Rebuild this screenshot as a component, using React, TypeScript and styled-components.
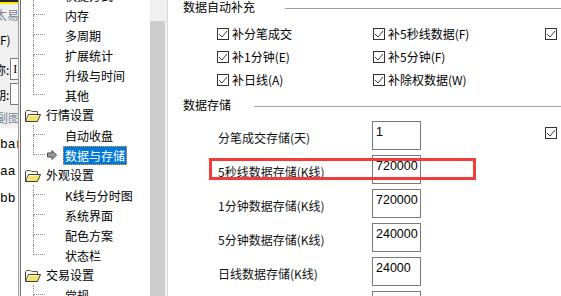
import React from "react";
import styled, { createGlobalStyle } from "styled-components";

const GlobalStyle = createGlobalStyle`
  html, body {
    margin: 0;
    padding: 0;
    background: #ffffff;
  }
  body {
    font-family: "Noto Sans CJK SC", "Liberation Sans", sans-serif;
    font-size: 12px;
    color: #000;
  }
`;

const Screen = styled.div`
  display: flex;
  width: 561px;
  height: 296px;
  overflow: hidden;
  background: #fff;
`;

/* ---------- window behind, only a sliver shows ---------- */

const BackWindow = styled.div`
  width: 18px;
  flex: none;
  display: flex;
  flex-direction: column;
  overflow: hidden;
  background: #f0f0f0;
  border-right: 1px solid #a0a0a0;
  white-space: nowrap;
`;

const TitleBand = styled.div`
  height: 2px;
  background: #ffea00;
  border-top: 2px solid #222;
`;

const BackText = styled.div<{ $top: number; $muted?: boolean; $shift?: number }>`
  margin-top: ${(p) => p.$top}px;
  height: 14px;
  line-height: 14px;
  color: ${(p) => (p.$muted ? "#7a8696" : "#000")};
  margin-left: ${(p) => p.$shift ?? 0}px;
`;

const BackField = styled.div<{ $top: number }>`
  display: flex;
  align-items: center;
  margin-top: ${(p) => p.$top}px;
  height: 22px;
  margin-left: -6px;
`;

const BackInput = styled.span`
  display: inline-block;
  width: 10px;
  height: 20px;
  margin-left: 1px;
  background: #fff;
  border: 1px solid #7a7a7a;
  border-right: none;
  font-family: "Liberation Serif", serif;
  font-size: 12px;
  line-height: 20px;
  padding-left: 2px;
`;

const CodeArea = styled.div`
  margin-top: 3px;
  flex: 1;
  background: #fff;
  padding-top: 3px;
  font-family: "Liberation Mono", monospace;
  font-size: 13px;
  line-height: 27px;
`;

const Gutter = styled.div`
  width: 1px;
  flex: none;
  background: #f0f0f0;
`;

/* ---------- tree ---------- */

const TreePanel = styled.div`
  width: 129px;
  flex: none;
  border-left: 1px solid #6f6f6f;
  background: #fff;
  overflow: hidden;
`;

const TreeList = styled.div`
  margin-top: -15px;
  display: flex;
  flex-direction: column;
`;

const GroupRow = styled.div`
  display: flex;
  align-items: center;
  height: 20px;
  padding-left: 4px;
`;

const GroupLabel = styled.span`
  margin-left: 5px;
  line-height: 16px;
  white-space: nowrap;
`;

const ChildRow = styled.div`
  display: flex;
  height: 20px;
`;

const Connector = styled.div`
  width: 12px;
  margin-left: 12px;
  flex: none;
  display: flex;
  flex-direction: column;
`;

const ConnTop = styled.div`
  height: 10px;
  border-left: 1px dotted #8a8a8a;
  border-bottom: 1px dotted #8a8a8a;
  box-sizing: border-box;
`;

const ConnBottom = styled.div<{ $last?: boolean }>`
  flex: 1;
  border-left: 1px ${(p) => (p.$last ? "none" : "dotted")} #8a8a8a;
`;

const IconSlot = styled.div`
  width: 16px;
  margin-left: 2px;
  flex: none;
  display: flex;
  align-items: center;
`;

const ChildLabel = styled.span<{ $selected?: boolean }>`
  align-self: center;
  height: 19px;
  line-height: 19px;
  padding: 0 2px;
  white-space: nowrap;
  box-sizing: border-box;
  color: ${(p) => (p.$selected ? "#fff" : "#000")};
  background: ${(p) => (p.$selected ? "#0078d7" : "transparent")};
  outline: ${(p) => (p.$selected ? "1px dotted #ff9b2f" : "none")};
  outline-offset: -1px;
`;

const ScrollBar = styled.div`
  width: 15px;
  flex: none;
  display: flex;
  flex-direction: column;
  background: #f0f0f0;
`;

const ScrollGap = styled.div`
  height: 21px;
`;

const ScrollThumb = styled.div`
  flex: 1;
  background: #cdcdcd;
`;

const Splitter = styled.div`
  width: 2px;
  flex: none;
  background: #f0f0f0;
  border-right: 1px solid #d9d9d9;
`;

/* ---------- settings page ---------- */

const Page = styled.div`
  flex: 1;
  min-width: 0;
  overflow: hidden;
  padding-left: 15px;
  display: flex;
  flex-direction: column;
`;

const GroupHeader = styled.div<{ $top: number }>`
  display: flex;
  align-items: center;
  height: 14px;
  margin-top: ${(p) => p.$top}px;
`;

const GroupTitle = styled.span`
  white-space: nowrap;
  line-height: 14px;
`;

const GroupLine = styled.div<{ $gap: number }>`
  flex: 1;
  height: 1px;
  margin-left: ${(p) => p.$gap}px;
  margin-top: 3px;
  background: #a0a0a0;
`;

const CheckGrid = styled.div`
  margin-top: 8px;
  padding-left: 34px;
  display: grid;
  grid-template-columns: 156px 172px 40px;
  grid-auto-rows: 23px;
`;

const CheckItem = styled.label`
  display: flex;
  align-items: center;
  gap: 3px;
  white-space: nowrap;
`;

const Box = styled.span`
  width: 12px;
  height: 12px;
  flex: none;
  box-sizing: border-box;
  border: 1px solid #333;
  background: #fff;
  display: flex;
  align-items: center;
  justify-content: center;
`;

const Fields = styled.div`
  margin-top: 9px;
  display: flex;
  flex-direction: column;
  gap: 5px;
`;

const FieldRow = styled.div`
  position: relative;
  display: grid;
  grid-template-columns: 154px 49px 124px 20px;
  height: 29px;
  padding-left: 35px;
`;

const FieldLabel = styled.span`
  align-self: center;
  margin-top: 3px;
  white-space: nowrap;
  color: #111;
`;

const ValueBox = styled.div`
  box-sizing: border-box;
  height: 29px;
  border: 1px solid #7a7a7a;
  padding: 2px 0 0 3px;
  font-family: "Liberation Sans", sans-serif;
  font-size: 12.5px;
  line-height: 16px;
  color: #000;
  background: #fff;
  white-space: nowrap;
  overflow: hidden;
`;

const FieldCheck = styled.div`
  grid-column: 4;
  align-self: start;
  margin-top: 6px;
`;

const Highlight = styled.div`
  position: absolute;
  left: 26px;
  top: 3px;
  width: 267px;
  height: 22px;
  box-sizing: border-box;
  border: 3px solid #f43b3b;
  pointer-events: none;
`;

/* ---------- drawings ---------- */

const FolderIcon = () => (
  <svg width="16" height="13" viewBox="0 0 16 13">
    <path d="M0.5 2.5 L1.5 1.5 L5.5 1.5 L6.5 2.5 L12.5 2.5 L12.5 5" fill="#fff7c8" stroke="#5a5a5a" />
    <path d="M0.5 2.5 L0.5 12.5 L12.5 12.5 L15.5 5.5 L3.5 5.5 L0.5 12.5" fill="#f5e36c" stroke="#3d3d3d" strokeLinejoin="round" />
    <path d="M2 11 L4.3 6.5 L14 6.5" fill="none" stroke="#fffbd5" />
  </svg>
);

const ArrowIcon = () => (
  <svg width="10" height="10" viewBox="0 0 10 10">
    <path d="M0.5 3 L5 3 L5 0.5 L9.5 5 L5 9.5 L5 7 L0.5 7 Z" fill="#9a9a9a" stroke="#4a4a4a" strokeLinejoin="round" />
  </svg>
);

const Tick = () => (
  <svg width="10" height="10" viewBox="0 0 10 10">
    <path d="M1 5 L4 8 L9 2" fill="none" stroke="#3a3a3a" strokeWidth="1" />
  </svg>
);

const CheckBox = () => (
  <Box>
    <Tick />
  </Box>
);

/* ---------- data ---------- */

type TreeNode =
  | { kind: "group"; label: string }
  | { kind: "child"; label: string; last?: boolean; selected?: boolean };

const tree: TreeNode[] = [
  { kind: "child", label: "快捷方式" },
  { kind: "child", label: "内存" },
  { kind: "child", label: "多周期" },
  { kind: "child", label: "扩展统计" },
  { kind: "child", label: "升级与时间" },
  { kind: "child", label: "其他", last: true },
  { kind: "group", label: "行情设置" },
  { kind: "child", label: "自动收盘" },
  { kind: "child", label: "数据与存储", last: true, selected: true },
  { kind: "group", label: "外观设置" },
  { kind: "child", label: "K线与分时图" },
  { kind: "child", label: "系统界面" },
  { kind: "child", label: "配色方案" },
  { kind: "child", label: "状态栏", last: true },
  { kind: "group", label: "交易设置" },
  { kind: "child", label: "常规" },
];

const supplements = [
  "补分笔成交",
  "补5秒线数据(F)",
  "",
  "补1分钟(E)",
  "补5分钟(F)",
  null,
  "补日线(A)",
  "补除权数据(W)",
  null,
];

const storage = [
  { label: "分笔成交存储(天)", value: "1", check: true },
  { label: "5秒线数据存储(K线)", value: "720000", mark: true },
  { label: "1分钟数据存储(K线)", value: "720000" },
  { label: "5分钟数据存储(K线)", value: "240000" },
  { label: "日线数据存储(K线)", value: "24000" },
  { label: "周线数据存储(K线)", value: "24000" },
];

export default function App() {
  return (
    <>
      <GlobalStyle />
      <Screen>
        <BackWindow>
          <TitleBand />
          <BackText $top={4} $muted $shift={-5}>
            太易
          </BackText>
          <BackText $top={11}>F)</BackText>
          <BackField $top={11}>
            称:<BackInput>I</BackInput>
          </BackField>
          <BackField $top={3}>
            期:<BackInput />
          </BackField>
          <BackText $top={6} $muted $shift={-4}>
            副图
          </BackText>
          <CodeArea>
            <div>bar</div>
            <div>aa:</div>
            <div>bb:</div>
          </CodeArea>
        </BackWindow>
        <Gutter />

        <TreePanel>
          <TreeList>
            {tree.map((node, i) =>
              node.kind === "group" ? (
                <GroupRow key={i}>
                  <FolderIcon />
                  <GroupLabel>{node.label}</GroupLabel>
                </GroupRow>
              ) : (
                <ChildRow key={i}>
                  <Connector>
                    <ConnTop />
                    <ConnBottom $last={node.last} />
                  </Connector>
                  <IconSlot>{node.selected && <ArrowIcon />}</IconSlot>
                  <ChildLabel $selected={node.selected}>{node.label}</ChildLabel>
                </ChildRow>
              )
            )}
          </TreeList>
        </TreePanel>

        <ScrollBar>
          <ScrollGap />
          <ScrollThumb />
        </ScrollBar>
        <Splitter />

        <Page>
          <GroupHeader $top={0}>
            <GroupTitle>数据自动补充</GroupTitle>
            <GroupLine $gap={30} />
          </GroupHeader>
          <CheckGrid>
            {supplements.map((s, i) =>
              s === null ? (
                <span key={i} />
              ) : (
                <CheckItem key={i}>
                  <CheckBox />
                  {s}
                </CheckItem>
              )
            )}
          </CheckGrid>

          <GroupHeader $top={7}>
            <GroupTitle>数据存储</GroupTitle>
            <GroupLine $gap={23} />
          </GroupHeader>
          <Fields>
            {storage.map((f) => (
              <FieldRow key={f.label}>
                <FieldLabel>{f.label}</FieldLabel>
                <ValueBox>{f.value}</ValueBox>
                {f.check && (
                  <FieldCheck>
                    <CheckBox />
                  </FieldCheck>
                )}
                {f.mark && <Highlight />}
              </FieldRow>
            ))}
          </Fields>
        </Page>
      </Screen>
    </>
  );
}
